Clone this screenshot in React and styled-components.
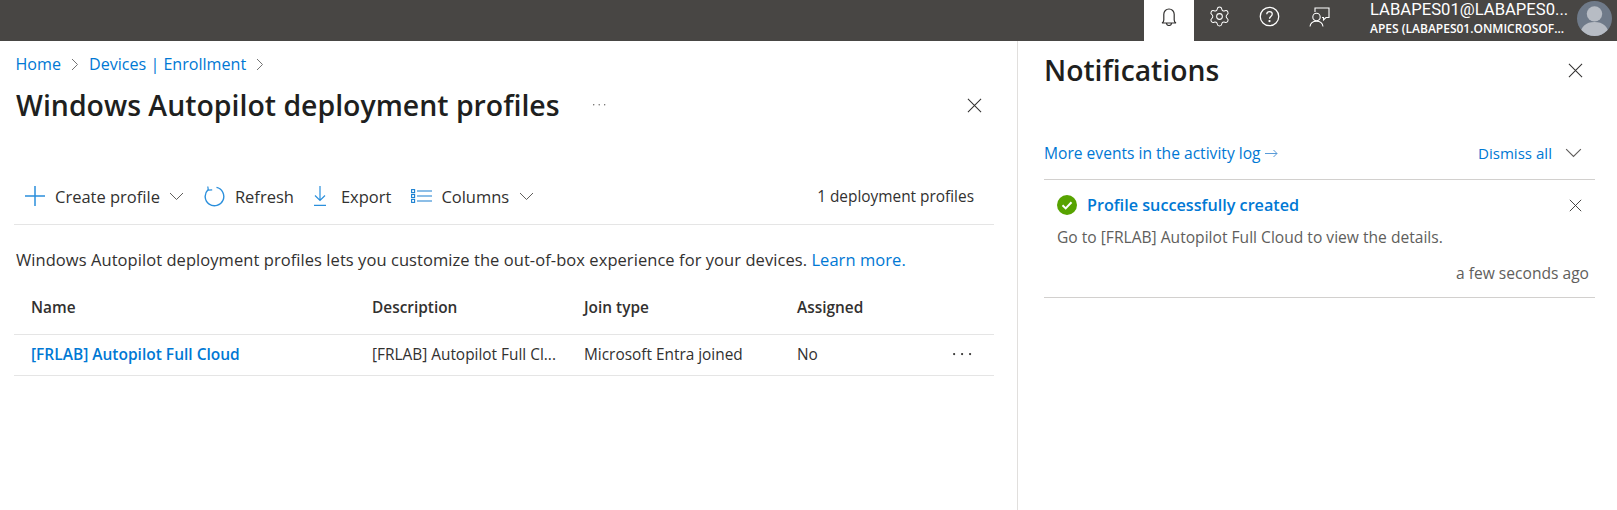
import styled, { createGlobalStyle } from 'styled-components';
import { Settings } from 'lucide-react';

const GlobalStyle = createGlobalStyle`
  html, body {
    margin: 0;
    padding: 0;
    background: #ffffff;
  }
  body {
    font-family: 'Open Sans', 'Noto Sans', 'Liberation Sans', sans-serif;
    color: #323130;
  }
`;

const Page = styled.div`
  width: 1617px;
  height: 510px;
  overflow: hidden;
  display: flex;
  flex-direction: column;
`;

const TopBar = styled.header`
  height: 41px;
  flex: none;
  background: #484644;
  display: flex;
  justify-content: flex-end;
  color: #ffffff;
`;

const TopButton = styled.div`
  width: 50px;
  height: 41px;
  box-sizing: border-box;
  padding-bottom: 8px;
  display: flex;
  align-items: center;
  justify-content: center;
  background: ${(p) => (p.$active ? '#ffffff' : 'transparent')};
  color: ${(p) => (p.$active ? '#323130' : '#ffffff')};
`;

const Account = styled.div`
  width: 207px;
  margin-left: 26px;
  display: flex;
  flex-direction: column;
`;

const AccountName = styled.div`
  font-family: Roboto, 'Open Sans', sans-serif;
  font-size: 16.65px;
  line-height: 20px;
  white-space: nowrap;
`;

const AccountOrg = styled.div`
  margin-top: 2px;
  font-size: 12px;
  line-height: 14px;
  font-weight: 600;
  white-space: nowrap;
`;

const Avatar = styled.div`
  width: 35px;
  height: 35px;
  margin: 1px 5px 0 0;
  border-radius: 50%;
  overflow: hidden;
  background: #6f7a89;
`;

const Body = styled.div`
  flex: 1;
  display: flex;
  min-height: 0;
`;

const Main = styled.main`
  width: 980px;
  flex: none;
  padding: 0 23px 0 14px;
  border-right: 1px solid #e1dfdd;
  display: flex;
  flex-direction: column;
`;

const Breadcrumb = styled.nav`
  height: 22px;
  margin: 12px 0 0 1.5px;
  display: flex;
  align-items: center;
  gap: 10px;
  font-size: 16.1px;
`;

const Crumb = styled.span`
  color: #0078d4;
`;

const TitleRow = styled.div`
  height: 44px;
  margin: 8px 0 0 2px;
  display: flex;
  align-items: center;
`;

const Title = styled.h1`
  margin: 0;
  font-size: 28.45px;
  font-weight: 600;
  color: #201f1e;
  white-space: nowrap;
`;

const TitleMore = styled.span`
  margin-left: 33px;
  display: flex;
`;

const CloseSlot = styled.span`
  margin-left: auto;
  margin-right: 12px;
  display: flex;
`;

const Toolbar = styled.div`
  height: 36px;
  margin-top: 51px;
  padding: 0 0 10px 10px;
  display: flex;
  align-items: center;
  border-bottom: 1px solid #e5e5e5;
`;

const ToolItem = styled.div`
  display: flex;
  align-items: center;
  margin-right: ${(p) => p.$mr || 0}px;
  font-size: 16.5px;
  white-space: nowrap;
`;

const ToolIcon = styled.span`
  display: flex;
  width: 22px;
  margin-right: ${(p) => p.$mr || 8}px;
  justify-content: center;
`;

const Caret = styled.span`
  display: flex;
  margin-left: ${(p) => p.$ml || 9}px;
`;

const ProfileCount = styled.div`
  margin-left: auto;
  margin-right: 20px;
  font-size: 15.4px;
  white-space: nowrap;
`;

const Intro = styled.p`
  margin: 25px 0 0 2px;
  font-size: 16.5px;
  line-height: 20px;
  letter-spacing: 0.06px;
  white-space: nowrap;
  color: #323130;
`;

const Link = styled.span`
  color: #0078d4;
`;

const Row = styled.div`
  height: ${(p) => (p.$head ? 65 : 41)}px;
  padding-top: ${(p) => (p.$head ? 10 : 0)}px;
  padding-bottom: ${(p) => (p.$head ? 0 : 2)}px;
  box-sizing: border-box;
  display: grid;
  grid-template-columns: 341px 212px 213px 156px 1fr;
  align-items: center;
  padding-left: 17px;
  border-bottom: 1px solid #e5e5e5;
  font-size: 15.4px;
  white-space: nowrap;
`;

const HeadCell = styled.span`
  font-weight: 600;
  color: #323130;
`;

const Cell = styled.span`
  overflow: hidden;
`;

const NameLink = styled.span`
  font-weight: 600;
  font-size: 15.5px;
  color: #0078d4;
`;

const RowMore = styled.span`
  display: flex;
`;

const Panel = styled.aside`
  width: 551px;
  padding: 0 22px 0 26px;
  display: flex;
  flex-direction: column;
`;

const PanelHead = styled.div`
  height: 30px;
  margin-top: 14px;
  display: flex;
  align-items: center;
  justify-content: space-between;
`;

const PanelTitle = styled.h2`
  margin: 0;
  font-size: 28.3px;
  font-weight: 600;
  color: #201f1e;
`;

const PanelClose = styled.span`
  display: flex;
  margin-right: 12px;
`;

const ActionRow = styled.div`
  height: 45px;
  margin-top: 50px;
  padding-bottom: 8px;
  box-sizing: border-box;
  display: flex;
  align-items: center;
  justify-content: space-between;
  border-bottom: 1px solid #d2d0ce;
  color: #0078d4;
`;

const ActivityLink = styled.span`
  display: flex;
  align-items: center;
  gap: 4px;
  font-size: 15.6px;
`;

const DismissAll = styled.span`
  display: flex;
  align-items: center;
  gap: 13px;
  padding-right: 13px;
  font-size: 15.1px;
`;

const Notice = styled.article`
  height: 118px;
  box-sizing: border-box;
  border-bottom: 1px solid #d2d0ce;
  padding: 13px 6px 0 13px;
  display: flex;
  flex-direction: column;
`;

const NoticeHead = styled.div`
  display: flex;
  align-items: center;
  height: 24px;
`;

const NoticeTitle = styled.span`
  margin-left: 10px;
  font-size: 16.2px;
  font-weight: 600;
  color: #0078d4;
`;

const NoticeClose = styled.span`
  margin-left: auto;
  margin-right: 7px;
  display: flex;
`;

const NoticeText = styled.div`
  margin-top: 11px;
  font-size: 15.6px;
  line-height: 18px;
  color: #605e5c;
`;

const NoticeTime = styled.div`
  margin-top: 18px;
  font-size: 15.6px;
  line-height: 18px;
  color: #605e5c;
  text-align: right;
`;

const Close = ({ size = 15 }) => (
  <svg width={size} height={size} viewBox="0 0 16 16" fill="none" stroke="#323130" strokeWidth="1.1">
    <path d="M1 1l14 14M15 1L1 15" />
  </svg>
);

const Chevron = ({ size = 15, color = '#605e5c' }) => (
  <svg width={size} height={size * 0.6} viewBox="0 0 15 9" fill="none" stroke={color} strokeWidth="1">
    <path d="M1 1l6.5 6.5L14 1" />
  </svg>
);

const CrumbArrow = () => (
  <svg width="8" height="13" viewBox="0 0 8 13" fill="none" stroke="#737373" strokeWidth="1">
    <path d="M1 1l5.5 5.5L1 12" />
  </svg>
);

const Dots = ({ width, gap, r, color }) => (
  <svg width={width} height={r * 2 + 2} viewBox={`0 0 ${width} ${r * 2 + 2}`} fill={color}>
    <circle cx={r} cy={r + 1} r={r} />
    <circle cx={r + gap} cy={r + 1} r={r} />
    <circle cx={r + gap * 2} cy={r + 1} r={r} />
  </svg>
);

const ArrowRight = () => (
  <svg width="13" height="9" viewBox="0 0 13 9" fill="none" stroke="#5a9bd8" strokeWidth="1">
    <path d="M0 4.5h12M8.5 1L12 4.5 8.5 8" />
  </svg>
);

const Bell = () => (
  <svg width="16" height="18" viewBox="0 0 16 18" fill="none" stroke="currentColor" strokeWidth="1.2">
    <path d="M1 15c1.2-.6 1.8-1.6 1.8-3V6.2a5.2 5.2 0 0 1 10.4 0V12c0 1.4.6 2.4 1.8 3z" />
    <path d="M5.5 15c0 1.5 1 2.5 2.500 2.5s2.5-1 2.5-2.5" />
  </svg>
);

const Help = () => (
  <svg width="21" height="21" viewBox="0 0 20 20" fill="none" stroke="currentColor" strokeWidth="1.2">
    <circle cx="10" cy="10" r="8.8" />
    <path d="M7.4 7.8c0-1.5 1.1-2.5 2.6-2.5s2.6 1 2.6 2.4c0 2.3-2.6 2.2-2.6 4.4" />
    <circle cx="10" cy="14.4" r=".5" fill="currentColor" />
  </svg>
);

const Feedback = () => (
  <svg width="21" height="20" viewBox="0 0 21 20" fill="none" stroke="currentColor" strokeWidth="1.1">
    <path d="M6 5V1h14v9.5h-3l-2.5 2.500v-2.500H13" />
    <circle cx="7.5" cy="10" r="3.7" />
    <path d="M1 19.5c.4-3.3 3-5.3 6.5-5.3s6.100 2 6.500 5.300" />
  </svg>
);

const AvatarIcon = () => (
  <svg width="35" height="35" viewBox="0 0 34 34">
    <circle cx="17" cy="12.5" r="7.5" fill="#b7bcc4" />
    <path d="M3 34c0-9 6-13.5 14-13.5S31 25 31 34z" fill="#b7bcc4" />
  </svg>
);

const Plus = () => (
  <svg width="20" height="20" viewBox="0 0 20 20" fill="none" stroke="#2a8fdc" strokeWidth="1.5">
    <path d="M10 0v20M0 10h20" />
  </svg>
);

const Refresh = () => (
  <svg width="21" height="21" viewBox="0 0 21 21" fill="none" stroke="#2a8fdc" strokeWidth="1.4">
    <path d="M12.5 1.400a9.300 9.300 0 1 1-8.500 2.400" />
    <path d="M3.8 .5l.5 3.7 3.900-.3" strokeWidth="1.2" />
  </svg>
);

const Download = () => (
  <svg width="14" height="20" viewBox="0 0 14 20" fill="none" stroke="#2a8fdc" strokeWidth="1.2">
    <path d="M7 0v14M2 9.5L7 14.500l5-5M1 19.400h12" />
  </svg>
);

const Columns = () => (
  <svg width="21" height="14" viewBox="0 0 21 14" fill="none" stroke="#1a7fd0" strokeWidth="1.1">
    <rect x=".6" y=".6" width="3" height="3" />
    <rect x=".6" y="5.5" width="3" height="3" />
    <rect x=".6" y="10.4" width="3" height="3" />
    <path d="M6 2h15M6 7h15M6 12h15" />
  </svg>
);

const Check = () => (
  <svg width="20" height="20" viewBox="0 0 20 20">
    <circle cx="10" cy="10" r="10" fill="#57a300" />
    <path d="M5.5 10.2l3.200 3.200 5.800-6.200" fill="none" stroke="#ffffff" strokeWidth="2" />
  </svg>
);

export default function App() {
  return (
    <Page>
      <GlobalStyle />
      <TopBar>
        <TopButton $active><Bell /></TopButton>
        <TopButton><Settings size={23} strokeWidth={1.05} /></TopButton>
        <TopButton><Help /></TopButton>
        <TopButton><Feedback /></TopButton>
        <Account>
          <AccountName>LABAPES01@LABAPES0...</AccountName>
          <AccountOrg>APES (LABAPES01.ONMICROSOF...</AccountOrg>
        </Account>
        <Avatar><AvatarIcon /></Avatar>
      </TopBar>
      <Body>
        <Main>
          <Breadcrumb>
            <Crumb>Home</Crumb>
            <CrumbArrow />
            <Crumb>Devices | Enrollment</Crumb>
            <CrumbArrow />
          </Breadcrumb>
          <TitleRow>
            <Title>Windows Autopilot deployment profiles</Title>
            <TitleMore><Dots width={14} gap={5.5} r={0.7} color="#605e5c" /></TitleMore>
            <CloseSlot><Close /></CloseSlot>
          </TitleRow>
          <Toolbar>
            <ToolItem $mr={20}>
              <ToolIcon $mr={9}><Plus /></ToolIcon>
              Create profile
              <Caret><Chevron /></Caret>
            </ToolItem>
            <ToolItem $mr={15}>
              <ToolIcon $mr={9}><Refresh /></ToolIcon>
              Refresh
            </ToolItem>
            <ToolItem $mr={19}>
              <ToolIcon $mr={10}><Download /></ToolIcon>
              Export
            </ToolItem>
            <ToolItem>
              <ToolIcon $mr={9}><Columns /></ToolIcon>
              Columns
              <Caret $ml={10}><Chevron /></Caret>
            </ToolItem>
            <ProfileCount>1 deployment profiles</ProfileCount>
          </Toolbar>
          <Intro>
            Windows Autopilot deployment profiles lets you customize the out-of-box experience for your devices. <Link>Learn more.</Link>
          </Intro>
          <Row $head>
            <HeadCell>Name</HeadCell>
            <HeadCell>Description</HeadCell>
            <HeadCell>Join type</HeadCell>
            <HeadCell>Assigned</HeadCell>
            <span />
          </Row>
          <Row>
            <NameLink>[FRLAB] Autopilot Full Cloud</NameLink>
            <Cell>[FRLAB] Autopilot Full Cl...</Cell>
            <Cell>Microsoft Entra joined</Cell>
            <Cell>No</Cell>
            <RowMore><Dots width={20} gap={8} r={1.1} color="#323130" /></RowMore>
          </Row>
        </Main>
        <Panel>
          <PanelHead>
            <PanelTitle>Notifications</PanelTitle>
            <PanelClose><Close /></PanelClose>
          </PanelHead>
          <ActionRow>
            <ActivityLink>More events in the activity log<ArrowRight /></ActivityLink>
            <DismissAll>
              Dismiss all
              <Chevron size={17} />
            </DismissAll>
          </ActionRow>
          <Notice>
            <NoticeHead>
              <Check />
              <NoticeTitle>Profile successfully created</NoticeTitle>
              <NoticeClose><Close size={13} /></NoticeClose>
            </NoticeHead>
            <NoticeText>Go to [FRLAB] Autopilot Full Cloud to view the details.</NoticeText>
            <NoticeTime>a few seconds ago</NoticeTime>
          </Notice>
        </Panel>
      </Body>
    </Page>
  );
}
